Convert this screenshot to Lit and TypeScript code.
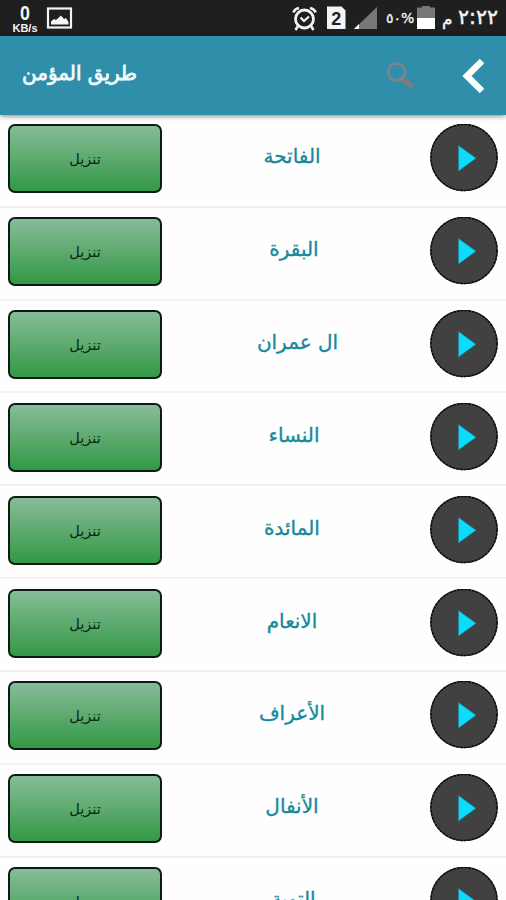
import { LitElement, html, css } from "lit";
import { customElement, property } from "lit/decorators.js";

// Each name with the space it keeps on its left, in pixels.
const SURAS: [string, number][] = [
  ["الفاتحة", 0],
  ["البقرة", 4],
  ["ال عمران", 11],
  ["النساء", 4],
  ["المائدة", 0],
  ["الانعام", 0],
  ["الأعراف", 0],
  ["الأنفال", 0],
  ["التوبة", 3],
];

@customElement("status-bar")
class StatusBar extends LitElement {
  static styles = css`
    :host {
      display: flex;
      align-items: flex-start;
      justify-content: space-between;
      height: 36px;
      box-sizing: border-box;
      padding: 0 8px 0 12px;
      background: #1f1f1f;
      color: #f4f4f4;
      font-family: "DejaVu Sans", "Noto Sans", sans-serif;
    }
    .group {
      display: flex;
      align-items: flex-start;
    }
    svg {
      display: block;
      height: 36px;
    }
    .sim,
    .signal {
      margin-left: 8px;
    }
    .speed {
      width: 26px;
      padding-top: 2px;
      text-align: center;
      white-space: nowrap;
    }
    .rate {
      font: bold 21px/22px "Liberation Sans", sans-serif;
      transform: scaleX(0.85);
    }
    .unit {
      font: bold 11px/8px "Liberation Sans", sans-serif;
    }
    .picture {
      margin-left: 8px;
    }
    .percent {
      width: 31px;
      margin-left: 8px;
      font-size: 14px;
      line-height: 37px;
      white-space: nowrap;
      letter-spacing: -0.4px;
      -webkit-text-stroke: 0.3px currentColor;
    }
    .meridiem {
      width: 10px;
      margin-left: 7px;
      font-size: 17px;
      line-height: 38px;
      -webkit-text-stroke: 0.4px currentColor;
    }
    .clock {
      width: 40px;
      margin-left: 6px;
      font-size: 20.5px;
      line-height: 34px;
      white-space: nowrap;
      -webkit-text-stroke: 0.5px currentColor;
    }
  `;

  render() {
    return html`
      <div class="group">
        <div class="speed">
          <div class="rate">0</div>
          <div class="unit">KB/s</div>
        </div>
        <svg class="picture" width="27" viewBox="0 0 27 36">
          <rect x="2" y="8.500" width="23" height="19" fill="none" stroke="#f4f4f4" stroke-width="2.200" />
          <path d="M5 24.500v-3l3-2.500 2 1 5-4.500 3 3.500 2-1 2.500 4v2.500z" fill="#f4f4f4" />
        </svg>
      </div>
      <div class="group">
        <svg width="27" viewBox="0 0 27 36" fill="none" stroke="#f4f4f4">
          <circle cx="12.500" cy="19" r="9" stroke-width="2.800" />
          <path d="M8.500 17.500l3.500 3.500 5-4.500" stroke-width="2.200" />
          <path d="M1.500 12.500Q2.500 9 7 8M23.500 12.500Q22.500 9 18 8" stroke-width="2.800" />
          <path d="M6 26l-2.500 4M19 26l2.500 4" stroke-width="2.500" />
        </svg>
        <svg class="sim" width="19" viewBox="0 0 19 36">
          <path d="M0 6.500h14.500l4 4v18.500h-18.500z" fill="#f4f4f4" />
          <text x="9.300" y="24.500" text-anchor="middle" font-family="Liberation Sans, sans-serif" font-weight="bold" font-size="18" fill="#1f1f1f">2</text>
        </svg>
        <svg class="signal" width="24" viewBox="0 0 24 36">
          <path d="M23 7v22h-23z" fill="#777" />
          <path d="M0 29l5-5v5z" fill="#fff" />
        </svg>
        <div class="percent">٥٠%</div>
        <svg width="18" viewBox="0 0 18 36">
          <path d="M5 6h8v1.500h5v10.500h-18v-10.500h5z" fill="#777" />
          <path d="M0 18h18v11h-18z" fill="#fff" />
        </svg>
        <div class="meridiem">م</div>
        <div class="clock">٢:٢٢</div>
      </div>
    `;
  }
}

@customElement("sura-row")
class SuraRow extends LitElement {
  @property() name = "";
  @property({ type: Number }) inset = 0;

  static styles = css`
    :host {
      display: grid;
      grid-template-columns: 154px 260px 68px;
      align-items: start;
      height: 92.83px;
      box-sizing: border-box;
      padding: 9.400px 8px 0;
      border-bottom: 2px solid #f1f1f1;
      font-family: "DejaVu Sans", "Noto Sans", sans-serif;
    }
    .download {
      height: 69px;
      box-sizing: border-box;
      border: 2px solid #0b1c12;
      border-radius: 7px;
      background: linear-gradient(#87bc98, #339845);
      color: #0c2614;
      font-size: 14.500px;
      line-height: 67px;
      text-align: center;
    }
    .name {
      font-size: 20px;
      line-height: 64px;
      text-align: center;
      color: #188a9c;
      -webkit-text-stroke: 0.35px currentColor;
    }
    svg {
      display: block;
      margin-left: 8px;
    }
  `;

  render() {
    return html`
      <div class="download" dir="rtl">تنزيل</div>
      <div class="name" dir="rtl" style="padding-left:${this.inset}px">${this.name}</div>
      <svg width="68" height="68" viewBox="0 0 68 68">
        <circle cx="34" cy="33.500" r="33.200" fill="#414141" stroke="#303030" stroke-width="1.300" />
        <circle cx="34" cy="33.500" r="33" fill="none" stroke="#0c0c0c" stroke-width="1.400" stroke-dasharray="2.600 1.200" />
        <path d="M28.500 21.500L46 34.300L28.500 47z" fill="#0bdcfb" stroke="#247f90" stroke-width=".7" />
      </svg>
    `;
  }
}

@customElement("app-root")
class AppRoot extends LitElement {
  static styles = css`
    :host {
      display: flex;
      flex-direction: column;
      height: 900px;
      overflow: hidden;
      background: #fefefe;
      font-family: "DejaVu Sans", "Noto Sans", sans-serif;
    }
    .toolbar {
      display: flex;
      flex: none;
      align-items: center;
      height: 79px;
      box-sizing: border-box;
      padding: 0 20px 0 22px;
      background: #2f8eaa;
      box-shadow: 0 1px 5px rgba(0, 0, 0, 0.5);
      z-index: 1;
    }
    status-bar,
    sura-row {
      flex: none;
    }
    .title {
      flex: 1;
      margin: 0 0 6px;
      font-size: 20px;
      font-weight: normal;
      line-height: 30px;
      color: #f2fafc;
      -webkit-text-stroke: 0.8px currentColor;
    }
    .search {
      margin-right: 48px;
    }
    .list {
      display: flex;
      flex-direction: column;
    }
  `;

  render() {
    return html`
      <status-bar></status-bar>
      <header class="toolbar">
        <h1 class="title">طريق المؤمن</h1>
        <svg class="search" width="28" height="28" viewBox="0 0 28 28" fill="none">
          <path d="M16.500 16l4 4" stroke="#85848a" stroke-width="2.500" />
          <circle cx="10.500" cy="10" r="8.500" stroke="#80848a" stroke-width="2.600" />
          <path d="M18.500 18.500l6 5" stroke="#85797c" stroke-width="5" stroke-linecap="round" />
        </svg>
        <svg width="24" height="36" viewBox="0 0 24 36">
          <path d="M20 3L5 18L20 33" fill="none" stroke="#fff" stroke-width="6.500" />
        </svg>
      </header>
      <main class="list">
        ${SURAS.map(([name, inset]) => html`<sura-row .name=${name} .inset=${inset}></sura-row>`)}
      </main>
    `;
  }
}
